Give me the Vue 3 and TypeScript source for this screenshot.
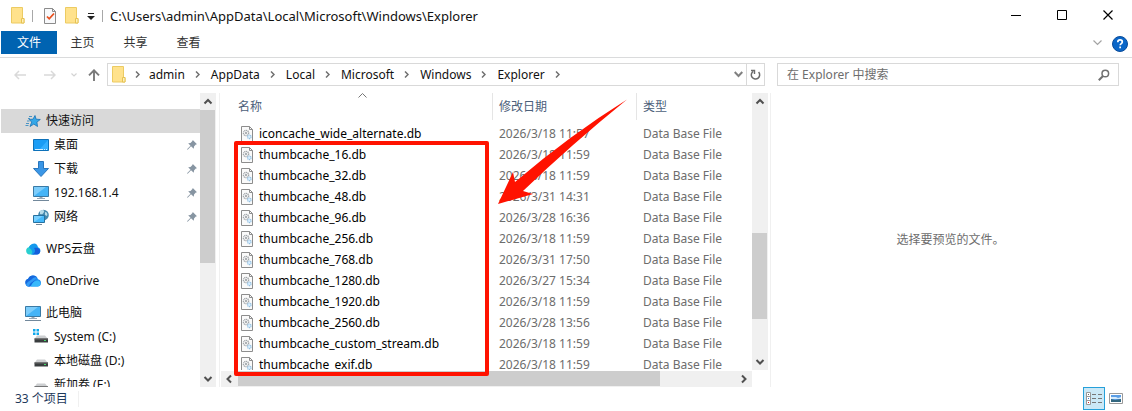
<script setup lang="ts">
import { ref } from 'vue'

interface NavItem {
  label: string
  icon: string
  level: number
  pinned?: boolean
  spaced?: boolean
  selected?: boolean
}

interface FileRow {
  name: string
  date: string
}

const path = 'C:\\Users\\admin\\AppData\\Local\\Microsoft\\Windows\\Explorer'
const tabs: string[] = ['主页', '共享', '查看']
const crumbs: string[] = ['admin', 'AppData', 'Local', 'Microsoft', 'Windows', 'Explorer']
const query = ref('')

const navItems: NavItem[] = [
  { label: '快速访问', icon: 'star', level: 0, selected: true },
  { label: '桌面', icon: 'desktop', level: 1, pinned: true },
  { label: '下载', icon: 'download', level: 1, pinned: true },
  { label: '192.168.1.4', icon: 'pc', level: 1, pinned: true },
  { label: '网络', icon: 'network', level: 1, pinned: true },
  { label: 'WPS云盘', icon: 'wps', level: 0, spaced: true },
  { label: 'OneDrive', icon: 'onedrive', level: 0, spaced: true },
  { label: '此电脑', icon: 'pc', level: 0, spaced: true },
  { label: 'System (C:)', icon: 'system', level: 1 },
  { label: '本地磁盘 (D:)', icon: 'drive', level: 1 },
  { label: '新加卷 (E:)', icon: 'drive', level: 1 },
]

const files: FileRow[] = [
  { name: 'iconcache_wide_alternate.db', date: '2026/3/18 11:57' },
  { name: 'thumbcache_16.db', date: '2026/3/18 11:59' },
  { name: 'thumbcache_32.db', date: '2026/3/18 11:59' },
  { name: 'thumbcache_48.db', date: '2026/3/31 14:31' },
  { name: 'thumbcache_96.db', date: '2026/3/28 16:36' },
  { name: 'thumbcache_256.db', date: '2026/3/18 11:59' },
  { name: 'thumbcache_768.db', date: '2026/3/31 17:50' },
  { name: 'thumbcache_1280.db', date: '2026/3/27 15:34' },
  { name: 'thumbcache_1920.db', date: '2026/3/18 11:59' },
  { name: 'thumbcache_2560.db', date: '2026/3/28 13:56' },
  { name: 'thumbcache_custom_stream.db', date: '2026/3/18 11:59' },
  { name: 'thumbcache_exif.db', date: '2026/3/18 11:59' },
]
</script>

<template>
  <div class="window">
    <header class="titlebar">
      <svg class="folder" viewBox="0 0 14 17"><path d="M.5.5h11v11h1.500v4.500H.5z" fill="#ffe28c" stroke="#eccb62" /><path d="M10.500 11.500h2.500v4.500h-2.500z" fill="#fff0b8" stroke="#e6c252" /></svg>
      <span class="rule"></span>
      <button class="quick" aria-label="属性">
        <svg width="12" height="16" viewBox="0 0 12 16"><path d="M.5.5h8l3 3v12H.5z" fill="#f8f9fb" stroke="#8b8b8b" /><path d="M8.500.5v3h3" fill="none" stroke="#8b8b8b" /><path d="M3 8.500l2.200 2.300L10 5.500" fill="none" stroke="#e8501f" stroke-width="1.800" /></svg>
      </button>
      <button class="quick" aria-label="新建文件夹">
        <svg class="folder" viewBox="0 0 14 17"><path d="M.5.5h11v11h1.500v4.500H.5z" fill="#ffe28c" stroke="#eccb62" /><path d="M10.500 11.500h2.500v4.500h-2.500z" fill="#fff0b8" stroke="#e6c252" /></svg>
      </button>
      <button class="quick more" aria-label="自定义快速访问工具栏">
        <svg width="8" height="7" viewBox="0 0 8 7"><path d="M1 0h6v1H1zM0 3h8L4 7z" fill="#222" /></svg>
      </button>
      <span class="rule"></span>
      <h1 class="title">{{ path }}</h1>
      <div class="controls">
        <button aria-label="最小化"><svg width="11" height="11" viewBox="0 0 11 11"><path d="M0 5.500h10" stroke="#000" /></svg></button>
        <button aria-label="最大化"><svg width="11" height="11" viewBox="0 0 11 11"><path d="M.5.5h9v9h-9z" fill="none" stroke="#000" /></svg></button>
        <button aria-label="关闭"><svg width="11" height="11" viewBox="0 0 11 11"><path d="M.5.5l9 9M9.500.5l-9 9" stroke="#000" stroke-width="1.200" /></svg></button>
      </div>
    </header>

    <div class="ribbon">
      <button class="tab file">文件</button>
      <button v-for="tab in tabs" :key="tab" class="tab">{{ tab }}</button>
      <button class="expand" aria-label="展开功能区">
        <svg width="9" height="6" viewBox="0 0 9 6"><path d="M.5.5l4 4 4-4" fill="none" stroke="#a3a3a3" stroke-width="1.200" /></svg>
      </button>
      <button class="help" aria-label="帮助">
        <svg width="16" height="16" viewBox="0 0 16 16"><circle cx="8" cy="8" r="7.500" fill="#0a66c8" stroke="#0a4c9a" /><path d="M5.800 6.200c0-1.500 1-2.300 2.300-2.300s2.200.8 2.200 2c0 1.700-2.100 1.700-2.100 3.400" fill="none" stroke="#fff" stroke-width="1.700" /><path d="M7.300 10.500H9v1.800H7.300z" fill="#fff" /></svg>
      </button>
    </div>

    <div class="navbar">
      <div class="history">
        <button aria-label="后退"><svg width="12" height="10" viewBox="0 0 12 10"><path d="M12 5H1M5 1L1 5l4 4" fill="none" stroke="#d9d9d9" stroke-width="1.500" /></svg></button>
        <button aria-label="前进"><svg width="12" height="10" viewBox="0 0 12 10"><path d="M0 5h11M7 1l4 4-4 4" fill="none" stroke="#d9d9d9" stroke-width="1.500" /></svg></button>
        <button class="recent" aria-label="最近浏览的位置"><svg width="6" height="4" viewBox="0 0 6 4"><path d="M.5.5L3 3 5.500.5" fill="none" stroke="#d3d3d3" stroke-width="1.200" /></svg></button>
        <button class="up" aria-label="上移"><svg width="12" height="12" viewBox="0 0 12 12"><path d="M6 12V1.500M1 6.300l5-5 5 5" fill="none" stroke="#7a7a7a" stroke-width="1.900" /></svg></button>
      </div>
      <nav class="address" aria-label="地址">
        <svg class="folder" viewBox="0 0 14 17"><path d="M.5.5h11v11h1.500v4.500H.5z" fill="#ffe28c" stroke="#eccb62" /><path d="M10.500 11.500h2.500v4.500h-2.500z" fill="#fff0b8" stroke="#e6c252" /></svg>
        <svg class="sep first" viewBox="0 0 5 7"><path d="M1 .5l3 3-3 3" fill="none" stroke="#707070" stroke-width="1.500" /></svg>
        <template v-for="crumb in crumbs" :key="crumb">
          <a href="#" class="crumb">{{ crumb }}</a>
          <svg class="sep" viewBox="0 0 5 7"><path d="M1 .5l3 3-3 3" fill="none" stroke="#707070" stroke-width="1.500" /></svg>
        </template>
        <button class="drop" aria-label="以前的位置"><svg width="9" height="7" viewBox="0 0 9 7"><path d="M.7 1l3.800 4L8.300 1" fill="none" stroke="#808080" stroke-width="2" /></svg></button>
        <button class="refresh" aria-label="刷新"><svg width="11" height="12" viewBox="0 0 11 12"><path d="M3.200 2.300A4.200 4.200 0 1 0 8.600 3" fill="none" stroke="#6b6b6b" stroke-width="1.500" /><path d="M1 1.500h3.500V5" fill="none" stroke="#6b6b6b" stroke-width="1.400" /></svg></button>
      </nav>
      <label class="search">
        <input v-model="query" type="text" placeholder="在 Explorer 中搜索" aria-label="在 Explorer 中搜索" />
        <svg width="12" height="12" viewBox="0 0 12 12"><circle cx="7.300" cy="4.500" r="3.300" fill="none" stroke="#707070" stroke-width="1.500" /><path d="M5 7L.8 11.300" stroke="#707070" stroke-width="2" /></svg>
      </label>
    </div>

    <main class="panes">
      <nav class="sidebar" aria-label="导航窗格">
        <ul class="tree">
          <li v-for="item in navItems" :key="item.label" :class="{ spaced: item.spaced }">
            <a href="#" class="node" :class="{ nested: item.level === 1, selected: item.selected }">
              <svg v-if="item.icon === 'star'" class="glyph" viewBox="0 0 16 16"><path d="M10 2.500l1.100 3.700 4.200.3-3.400 2.600.6 4.400-3.700-2.400-3.800 2.400 1.700-4.400-2.600-2.700 3.900-.2z" fill="#35a8e8" stroke="#1671b5" stroke-width=".8" /><path d="M4 3.500h3M3 5.500h2M2 8h2.500M1 10.500h3M.5 12.500h3" stroke="#4a94c4" /></svg>
              <svg v-else-if="item.icon === 'desktop'" class="glyph" viewBox="0 0 16 16"><path d="M.5 2.500h15v11H.5z" fill="#1b9df5" stroke="#0d71b9" /><path d="M6 13L15 3v10z" fill="#35b0ff" /><path d="M2 12.500h8M11 12.500h1M13 12.500h1" stroke="#d8f0ff" /></svg>
              <svg v-else-if="item.icon === 'download'" class="glyph" viewBox="0 0 16 16"><path d="M5.500.5h5v7h5L8 15.500.5 7.500h5z" fill="#3a96e6" stroke="#2876bd" /></svg>
              <svg v-else-if="item.icon === 'pc'" class="glyph" viewBox="0 0 16 16"><path d="M.5 1.500h15v10H.5z" fill="#45b4f7" stroke="#3a7aa5" /><path d="M1 11V2h12z" fill="#7dcdfb" /><path d="M6.500 12h3v1h-3z" fill="#9aa8b4" /><path d="M4 13.500h8" stroke="#98a8b6" /><path d="M0 15.500h16" stroke="#72889b" /></svg>
              <svg v-else-if="item.icon === 'network'" class="glyph" viewBox="0 0 16 16"><circle cx="10.500" cy="6" r="5.300" fill="#4489ae" /><path d="M7 2c2-2 5-.8 4 1S9 6 7 5M12 3c2 0 3 2 2 4l-2-1z" fill="#b7dbe9" /><path d="M.5 6.500h11v7H.5z" fill="#45b9fb" stroke="#27719f" /><path d="M1 13V7h9z" fill="#79d0ff" /><path d="M3 15.500h6" stroke="#748899" /></svg>
              <svg v-else-if="item.icon === 'wps'" class="glyph" viewBox="0 0 16 16"><path d="M4.500 13.500a3.700 3.700 0 0 1-.8-7.200A4.700 4.700 0 0 1 12 5.500l-3 8z" fill="#29cfd0" /><path d="M7 3c3-1.500 5.500.2 6 3.200a3.800 3.800 0 0 1-1 7.300H6C9 11 6 8 4 6.500 4.500 5 5.500 3.800 7 3z" fill="#1599ed" /><path d="M9 7c3-1 6.500.3 6.200 3.200-.2 2-1.500 3.300-3.200 3.300H7c3-1 4-4 2-6.500z" fill="#155fdb" /></svg>
              <svg v-else-if="item.icon === 'onedrive'" class="glyph" viewBox="0 0 16 16"><path d="M4 13.500a4 4 0 0 1-.8-7.800A5.200 5.200 0 0 1 13 6.200a3.700 3.700 0 0 1-.3 7.300z" fill="#1d8df0" /><path d="M3.200 5.700C5 1.500 10 1.500 12 4.500L5 13.500H4a4 4 0 0 1-.8-7.800z" fill="#1667dc" /><path d="M1 12c1-4 5-4 7-7 1.500-1 3-1 4-.5-2 4-7 4-8 9C2.800 13.500 1.500 13 1 12z" fill="#3099f5" /><path d="M6 13.500c1-4 4-6 7-6 3 1 4 5-.3 6z" fill="#38b8fb" /></svg>
              <svg v-else class="glyph" viewBox="0 0 16 16"><g v-if="item.icon === 'system'" fill="#10a8eb"><path d="M0 0h2.500v2.500H0zM3.500 0H6v2.500H3.500zM0 3.500h2.500V6H0zM3.500 3.500H6V6H3.500z" /></g><path d="M4 6.500h8l3 3.500H1.500z" fill="#cdcfd1" /><path d="M1.500 9.500H15v4H1.500z" fill="#393d3e" /><path d="M1.500 10H15" stroke="#666" /><path d="M11 11.500h2" stroke="#43da68" /></svg>
              <span>{{ item.label }}</span>
              <svg v-if="item.pinned" class="pin" viewBox="0 0 10 10"><path d="M5.800 0L10 4.200 8.800 4.600 7 6.500l-.2 2.200L4 6.200.7 9.700 0 9.300 3.500 5.800 1.200 3.300l2.300-.2 1.900-2z" fill="#8795a2" /></svg>
            </a>
          </li>
        </ul>
        <div class="vscroll" aria-hidden="true">
          <svg class="arrow" viewBox="0 0 17 17"><path d="M4.500 10.500L8 7l3.500 3.500" fill="none" stroke="#505050" stroke-width="2" /></svg>
          <div class="track"><div class="thumb nav-thumb"></div></div>
          <svg class="arrow" viewBox="0 0 17 17"><path d="M4.500 7L8 10.500 11.500 7" fill="none" stroke="#505050" stroke-width="2" /></svg>
        </div>
      </nav>

      <section class="files">
        <div class="upper">
          <div class="listing">
            <table>
              <colgroup><col class="c-name" /><col class="c-date" /><col class="c-type" /></colgroup>
              <thead>
                <tr>
                  <th scope="col" aria-sort="ascending"><span class="heading">名称</span><svg class="sort" viewBox="0 0 9 5"><path d="M.5 4.500l4-4 4 4" fill="none" stroke="#777" /></svg></th>
                  <th scope="col"><span class="heading">修改日期</span></th>
                  <th scope="col"><span class="heading">类型</span></th>
                </tr>
              </thead>
              <tbody>
                <tr v-for="file in files" :key="file.name">
                  <td class="name">
                    <div class="entry">
                      <svg width="12" height="16" viewBox="0 0 12 16"><path d="M.5.5h8l3 3v12H.5z" fill="#fafafa" stroke="#8d8d8d" /><path d="M8.500.5v3h3" fill="none" stroke="#8d8d8d" /><circle cx="5" cy="7" r="2.600" fill="none" stroke="#a3a8ac" stroke-width="1.400" stroke-dasharray="1.200 .5" /><circle cx="5" cy="7" r="1" fill="#92999e" /><circle cx="8.300" cy="10.800" r="1.800" fill="#d9efff" stroke="#93c0e2" stroke-width="1.200" stroke-dasharray="1.200 .5" /></svg>
                      <span>{{ file.name }}</span>
                    </div>
                  </td>
                  <td>{{ file.date }}</td>
                  <td>Data Base File</td>
                </tr>
              </tbody>
            </table>
          </div>
          <div class="vscroll" aria-hidden="true">
            <svg class="arrow" viewBox="0 0 17 17"><path d="M4.500 10.500L8 7l3.500 3.500" fill="none" stroke="#505050" stroke-width="2" /></svg>
            <div class="track low"><div class="thumb list-thumb"></div></div>
            <svg class="arrow" viewBox="0 0 17 17"><path d="M4.500 7L8 10.500 11.500 7" fill="none" stroke="#505050" stroke-width="2" /></svg>
          </div>
        </div>
        <div class="hscroll" aria-hidden="true">
          <svg class="arrow" viewBox="0 0 17 17"><path d="M10 4.500L6.500 8l3.500 3.500" fill="none" stroke="#505050" stroke-width="2" /></svg>
          <div class="track"><div class="thumb wide-thumb"></div></div>
          <svg class="arrow" viewBox="0 0 17 17"><path d="M7 4.500L10.500 8 7 11.500" fill="none" stroke="#505050" stroke-width="2" /></svg>
        </div>
      </section>

      <aside class="preview">选择要预览的文件。</aside>
    </main>

    <footer class="status">
      <span class="count">33 个项目</span>
      <div class="views">
        <button class="view on" aria-label="详细信息">
          <svg width="16" height="13" viewBox="0 0 16 13"><path d="M.5.5h4v12h-4zM.5 4.500h4M.5 8.500h4" fill="#fff" stroke="#999" /><path d="M2 2h1v1H2z" fill="#666" /><path d="M2 6h1v1H2z" fill="#3b78d8" /><path d="M2 10h1v1H2z" fill="#d22" /><path d="M6 2.500h4M12 2.500h4M6 6.500h4M12 6.500h4M6 10.500h4M12 10.500h4" stroke="#777" /></svg>
        </button>
        <button class="view" aria-label="大缩略图">
          <svg width="14" height="11" viewBox="0 0 14 11"><path d="M.5.5h13v10H.5z" fill="#fff" stroke="#999" /><path d="M2 2h10v7H2z" fill="#5b9ee6" /><path d="M2 4h5l2 1 3-1v2H2z" fill="#d6ebfb" /><path d="M2 6l4 1 6-1v3H2z" fill="#33677f" /></svg>
        </button>
      </div>
    </footer>

    <div class="highlight" aria-hidden="true"></div>
    <svg class="pointer" viewBox="0 0 130 106" aria-hidden="true"><path d="M129 .5Q72 36 17 83L15 73 0 105l35-10-10-3Q74 45 129 .5z" fill="#ff1200" /></svg>
  </div>
</template>

<style>
html,
body {
  margin: 0;
  background: #fff;
}
</style>

<style scoped>
* {
  box-sizing: border-box;
}

.window {
  position: relative;
  display: flex;
  flex-direction: column;
  height: 100vh;
  min-height: 240px;
  overflow: hidden;
  font: 12px/16px "Noto Sans", "Noto Sans CJK SC", sans-serif;
  color: #111;
  background: #fff;
}

button {
  display: flex;
  align-items: center;
  justify-content: center;
  padding: 0;
  border: 0;
  background: none;
  font: inherit;
  color: inherit;
}

a {
  color: inherit;
  text-decoration: none;
}

svg {
  display: block;
  flex: none;
}

.folder {
  width: 14px;
  height: 17px;
}

.titlebar {
  display: flex;
  align-items: center;
  height: 31px;
  padding: 0 1px 0 11px;
}

.rule {
  width: 1px;
  height: 12px;
  margin: 0 11px 0 7px;
  background: #a8a8a8;
}

.quick {
  margin-right: 9px;
}

.more {
  margin: 2px 0 0 -1px;
}

.more + .rule {
  margin-right: 7px;
}

.title {
  margin: 0;
  font-size: 13px;
  font-weight: 400;
}

.controls {
  display: flex;
  align-self: stretch;
  margin-left: auto;
}

.controls button {
  width: 46px;
}

.ribbon {
  display: flex;
  flex: none;
  height: 27px;
  padding: 0 4px 3px 1px;
  border-bottom: 1px solid #dadbdc;
}

.tab {
  width: 53px;
  padding-right: 2px;
  color: #333;
}

.tab.file {
  width: 56px;
  padding-right: 0;
  color: #fff;
  background: #0063b1;
}

.expand {
  margin-left: auto;
}

.help {
  width: 16px;
  margin-left: 10px;
  padding-top: 3px;
}

.navbar {
  display: flex;
  flex: none;
  align-items: center;
  height: 35px;
  padding: 0 13px 2px 14px;
}

.history {
  display: flex;
  align-items: center;
  width: 93px;
}

.history button {
  margin-right: 18px;
}

.history .recent {
  width: 6px;
  margin: 0 11px 0 -3px;
}

.history .up {
  margin: 0;
}

.address {
  display: flex;
  flex: 652 1 0;
  align-items: center;
  height: 23px;
  padding-left: 4px;
  border: 1px solid #d9d9d9;
}

.sep {
  width: 5px;
  height: 7px;
  margin: 0 11px 0 10px;
}

.sep.first {
  margin: 0 9px;
}

.drop {
  width: 15px;
  margin-left: auto;
}

.refresh {
  align-self: stretch;
  width: 18px;
  border-left: 1px solid #d9d9d9;
}

.search {
  display: flex;
  flex: 323 1 0;
  align-items: center;
  height: 23px;
  margin-left: 12px;
  padding: 0 8px 0 9px;
  border: 1px solid #d9d9d9;
}

.search input {
  flex: 1;
  min-width: 0;
  padding: 0;
  border: 0;
  outline: 0;
  background: none;
  font: inherit;
}

.search input::placeholder {
  color: #6d6d6d;
  opacity: 1;
}

.panes {
  display: flex;
  flex: 1;
  min-height: 0;
}

.sidebar {
  display: flex;
  flex: none;
  width: 220px;
  padding-right: 3px;
  border-right: 1px solid #f0f0f0;
}

.tree {
  flex: 1;
  min-width: 0;
  margin: 0;
  padding: 16px 0 0 1px;
  overflow: hidden;
  list-style: none;
}

.spaced {
  margin-top: 8px;
}

.node {
  display: flex;
  align-items: center;
  gap: 5px;
  height: 24px;
  padding: 0 3px 0 24px;
}

.nested {
  padding-left: 32px;
}

.selected {
  background: #d9d9d9;
}

.glyph {
  width: 16px;
  height: 16px;
}

.pin {
  width: 10px;
  height: 10px;
  margin-left: auto;
}

.vscroll {
  display: flex;
  flex: none;
  flex-direction: column;
  width: 16px;
  background: #f0f0f0;
}

.arrow {
  width: 17px;
  height: 17px;
}

.track {
  display: flex;
  flex: 1;
}

.low {
  align-items: flex-end;
  padding-bottom: 34px;
}

.thumb {
  background: #cdcdcd;
}

.nav-thumb {
  width: 15px;
  height: 59%;
}

.list-thumb {
  width: 15px;
  height: 41%;
}

.wide-thumb {
  width: 85%;
  height: 15px;
}

.files {
  display: flex;
  flex: none;
  flex-direction: column;
  width: 551px;
  padding-left: 1px;
  border-right: 1px solid #f0f0f0;
}

.upper {
  display: flex;
  flex: 1;
  gap: 1px;
  min-height: 0;
  margin-bottom: 1px;
  padding-right: 2px;
}

.listing {
  flex: 1;
  min-width: 0;
  overflow: hidden;
}

.hscroll {
  display: flex;
  flex: none;
  width: 531px;
  height: 16px;
  background: #f0f0f0;
}

table {
  width: 100%;
  border-collapse: collapse;
  table-layout: fixed;
  color: #6d6d6d;
}

.c-name {
  width: 271px;
}

.c-date {
  width: 144px;
}

th {
  position: relative;
  height: 30px;
  padding: 0 0 3px;
  font-weight: 400;
  color: #4c607a;
  text-align: left;
}

.heading {
  display: flex;
  align-items: center;
  height: 27px;
  padding-left: 6px;
  border-left: 1px solid #e5e5e5;
}

th:first-child .heading {
  padding-left: 17px;
  border: 0;
}

.sort {
  position: absolute;
  top: 0;
  left: 137px;
  width: 9px;
  height: 5px;
}

td {
  height: 21px;
  padding: 0 0 0 7px;
  white-space: nowrap;
}

.name {
  padding-left: 20px;
  color: #000;
}

.entry {
  display: flex;
  align-items: center;
  gap: 6px;
}

.preview {
  display: flex;
  flex: 1;
  align-items: center;
  justify-content: center;
  min-width: 0;
  padding-right: 2px;
  color: #6d6d6d;
}

.status {
  display: flex;
  flex: none;
  align-items: center;
  height: 24px;
  padding: 0 5px 1px 15px;
  color: #1e395b;
}

.count {
  padding-right: 10px;
  border-right: 1px solid #f0f0f0;
}

.views {
  display: flex;
  margin-left: auto;
}

.view {
  width: 22px;
  height: 23px;
}

.view.on {
  border: 1px solid #26a0da;
  background: #cbe8f6;
}

.highlight {
  position: absolute;
  top: 141px;
  left: 234px;
  width: 255px;
  height: 235px;
  border: 4px solid #ff1200;
  border-radius: 2px;
}

.pointer {
  position: absolute;
  top: 99px;
  left: 498px;
  width: 130px;
  height: 106px;
}
</style>
